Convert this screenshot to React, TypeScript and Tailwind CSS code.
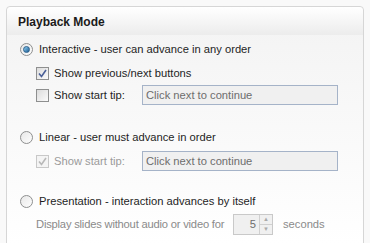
import React from "react";

function Radio({ checked }: { checked?: boolean }) {
  return (
    <span className="w-[13px] h-[13px] rounded-full border border-[#8e8f8f] bg-gradient-to-br from-[#e8e8e8] to-[#fdfdfd] flex items-center justify-center shrink-0">
      {checked && (
        <span className="w-[7px] h-[7px] rounded-full bg-gradient-to-br from-[#8fd2f5] to-[#1c5d92] border border-[#2b5f8b]" />
      )}
    </span>
  );
}

function Check({ checked, disabled }: { checked?: boolean; disabled?: boolean }) {
  return (
    <span
      className={`w-[13px] h-[13px] border flex items-center justify-center shrink-0 ${
        disabled ? "border-[#c8c8c8] bg-[#f4f4f4]" : "border-[#8e8f8f] bg-gradient-to-br from-[#dcdcdc] to-[#fbfbfb]"
      }`}
    >
      {checked && (
        <svg width="9" height="9" viewBox="0 0 9 9">
          <path
            d="M1 4.5 L3.5 7.5 L8 1"
            fill="none"
            stroke={disabled ? "#b8b8b8" : "#4a5f97"}
            strokeWidth="1.6"
          />
        </svg>
      )}
    </span>
  );
}

function TipInput() {
  return (
    <div className="w-[196px] h-[20px] border border-[#a5b3c8] bg-[#f0f0f0] text-[#6d6d6d] px-[3px] flex items-center">
      Click next to continue
    </div>
  );
}

export default function App() {
  return (
    <div
      className="w-[370px] h-[243px] bg-[#f9f9f9] pl-[6px] pr-[6px] pt-[6px] text-[11.2px] text-[#1e1e1e]"
      style={{ fontFamily: "'Liberation Sans', Arial, sans-serif" }}
    >
      <div className="h-[240px] border border-[#d6d6d6] rounded-t-[4px] bg-gradient-to-b from-[#f3f3f3] to-[#ffffff]">
        <div className="h-[28px] bg-gradient-to-b from-[#ffffff] to-[#ececec] rounded-t-[4px] pl-[11px] pt-[6px] font-bold text-[12px] text-[#1a1a1a]">
          Playback Mode
        </div>
        <div className="pl-[13px] pt-[7px]">
          <div className="flex items-center gap-[6px] h-[14px]">
            <Radio checked />
            <span>Interactive - user can advance in any order</span>
          </div>
          <div className="pl-[16px] mt-[10px] flex items-center gap-[5px] h-[14px]">
            <Check checked />
            <span>Show previous/next buttons</span>
          </div>
          <div className="pl-[16px] mt-[5px] flex items-center h-[20px]">
            <Check />
            <span className="ml-[5px] w-[88px]">Show start tip:</span>
            <TipInput />
          </div>
          <div className="mt-[25px] flex items-center gap-[6px] h-[14px]">
            <Radio />
            <span>Linear - user must advance in order</span>
          </div>
          <div className="pl-[16px] mt-[7px] flex items-center h-[20px] text-[#9a9a9a]">
            <Check checked disabled />
            <span className="ml-[5px] w-[88px]">Show start tip:</span>
            <TipInput />
          </div>
          <div className="mt-[23px] flex items-center gap-[6px] h-[14px]">
            <Radio />
            <span>Presentation - interaction advances by itself</span>
          </div>
          <div className="pl-[16px] mt-[5px] flex items-center h-[22px] text-[#8a8a8a]">
            <span className="w-[197px] whitespace-nowrap tracking-[-0.2px]">Display slides without audio or video for</span>
            <div className="w-[40px] h-[21px] border border-[#c9c9c9] bg-[#f0f0f0] flex items-center justify-end">
              <span className="pr-[3px] text-[#6d6d6d]">5</span>
              <div className="w-[13px] h-[19px] flex flex-col border-l border-[#d0d0d0]">
                <div className="flex-1 flex items-center justify-center border-b border-[#d0d0d0] text-[6px] text-[#aaaaaa] leading-none">▲</div>
                <div className="flex-1 flex items-center justify-center text-[6px] text-[#aaaaaa] leading-none">▼</div>
              </div>
            </div>
            <span className="ml-[10px]">seconds</span>
          </div>
        </div>
      </div>
    </div>
  );
}
